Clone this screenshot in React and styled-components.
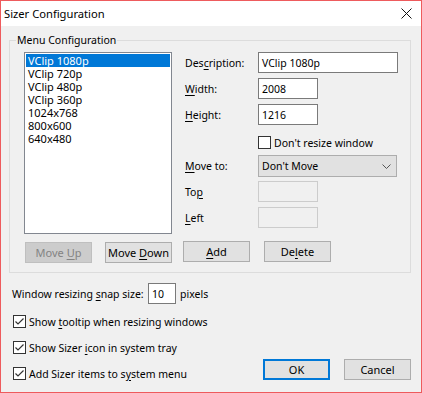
import React from "react";
import styled, { createGlobalStyle } from "styled-components";

const GlobalStyle = createGlobalStyle`
  html, body {
    margin: 0;
    padding: 0;
    background: #f0f0f0;
  }
  body {
    font-family: "Noto Sans", "Segoe UI", sans-serif;
    font-size: 10.5px;
    color: #000;
  }
`;

const Window = styled.div`
  width: 422px;
  height: 393px;
  box-sizing: border-box;
  border: 1px solid #ee5b5d;
  background: #f0f0f0;
  display: flex;
  flex-direction: column;
`;

const TitleBar = styled.div`
  height: 25px;
  background: #fff;
  display: flex;
  align-items: center;
  justify-content: space-between;
  padding: 0 9px 0 3px;
  font-size: 11.2px;
`;

const Title = styled.span`
  line-height: 16px;
`;

const Group = styled.div`
  position: relative;
  margin: 14px 0 0 8px;
  width: 402px;
  height: 233px;
  box-sizing: border-box;
  border: 1px solid #dcdcdc;
  display: flex;
  padding: 11px 0 0 14px;
`;

const Legend = styled.span`
  position: absolute;
  top: -9px;
  left: 6px;
  padding: 0 1px;
  line-height: 16px;
  background: #f0f0f0;
`;

const LeftCol = styled.div`
  width: 148px;
  display: flex;
  flex-direction: column;
`;

const ListBox = styled.div`
  height: 182px;
  box-sizing: border-box;
  border: 1px solid #828790;
  background: #fff;
  padding: 1px;
  font-size: 11px;
`;

const ListItem = styled.div`
  height: 13px;
  line-height: 13px;
  padding-left: 2px;
  white-space: nowrap;
  background: ${({ selected }) => (selected ? "#0078d7" : "transparent")};
  color: ${({ selected }) => (selected ? "#fff" : "#000")};
`;

const ButtonRow = styled.div`
  display: flex;
  gap: ${({ gap }) => gap || 14}px;
  margin-top: ${({ top }) => top || 0}px;
  margin-left: ${({ left }) => left || 0}px;
`;

const Button = styled.button`
  width: 67px;
  height: 21px;
  padding: 0;
  box-sizing: border-box;
  font: inherit;
  font-size: 11px;
  line-height: 16px;
  white-space: nowrap;
  color: ${({ disabled }) => (disabled ? "#838383" : "#000")};
  background: ${({ disabled }) => (disabled ? "#cccccc" : "#e1e1e1")};
  border: ${({ primary, disabled }) =>
    primary
      ? "2px solid #0078d7"
      : disabled
      ? "1px solid #bfbfbf"
      : "1px solid #adadad"};
`;

const RightCol = styled.div`
  margin-left: 13px;
  display: flex;
  flex-direction: column;
`;

const Row = styled.div`
  display: grid;
  grid-template-columns: 73px auto;
  align-items: center;
  margin-top: ${({ top }) => top || 0}px;
  height: ${({ h }) => h || 21}px;
`;

const Label = styled.span`
  line-height: 16px;
  white-space: nowrap;
`;

const Key = styled.u`
  text-decoration: underline;
  text-underline-offset: 2px;
`;

const Field = styled.div`
  width: ${({ w }) => w}px;
  height: 21px;
  box-sizing: border-box;
  border: 1px solid ${({ disabled }) => (disabled ? "#cccccc" : "#7a7a7a")};
  background: ${({ disabled }) => (disabled ? "#f0f0f0" : "#fff")};
  padding-left: 3px;
  display: flex;
  align-items: center;
  white-space: nowrap;
`;

const Combo = styled.div`
  width: 139px;
  height: 22px;
  box-sizing: border-box;
  border: 1px solid #adadad;
  background: #e1e1e1;
  padding: 0 5px 0 3px;
  display: flex;
  align-items: center;
  justify-content: space-between;
`;

const CheckRow = styled.label`
  display: flex;
  align-items: center;
  gap: 3px;
  height: 13px;
  margin-top: ${({ top }) => top || 0}px;
  margin-left: ${({ left }) => left || 0}px;
  white-space: nowrap;
`;

const Box = styled.span`
  width: 13px;
  height: 13px;
  box-sizing: border-box;
  border: 1px solid #333;
  background: #fff;
  display: flex;
  flex-shrink: 0;
`;

const Footer = styled.div`
  display: flex;
  align-items: flex-end;
  margin-top: 10px;
  padding: 0 10px 0 11px;
`;

const Options = styled.div`
  display: flex;
  flex-direction: column;
`;

const SnapRow = styled.div`
  display: flex;
  align-items: center;
  height: 21px;
`;

const SnapLabel = styled.span`
  width: 136px;
  white-space: nowrap;
`;

const Unit = styled.span`
  margin-left: 4px;
`;

const Actions = styled(ButtonRow)`
  margin-left: auto;
`;

const CloseIcon = () => (
  <svg width="11" height="11" viewBox="0 0 11 11">
    <path d="M0.5 0.5 L10.5 10.5 M10.5 0.5 L0.5 10.5" stroke="#111" strokeWidth="1" />
  </svg>
);

const Chevron = () => (
  <svg width="9" height="5" viewBox="0 0 9 5">
    <path d="M0.5 0.5 L4.5 4.5 L8.5 0.5" stroke="#555" strokeWidth="1" fill="none" />
  </svg>
);

const Checkbox = ({ checked, children, top, left }) => (
  <CheckRow top={top} left={left}>
    <Box>
      {checked && (
        <svg width="11" height="11" viewBox="0 0 11 11">
          <path d="M1.5 5.5 L4 8 L9.5 2.5" stroke="#333" strokeWidth="1.2" fill="none" />
        </svg>
      )}
    </Box>
    <span>{children}</span>
  </CheckRow>
);

const items = [
  "VClip 1080p",
  "VClip 720p",
  "VClip 480p",
  "VClip 360p",
  "1024x768",
  "800x600",
  "640x480",
];

export default function App() {
  return (
    <>
      <GlobalStyle />
      <Window>
        <TitleBar>
          <Title>Sizer Configuration</Title>
          <CloseIcon />
        </TitleBar>

        <Group>
          <Legend>Menu Configuration</Legend>
          <LeftCol>
            <ListBox>
              {items.map((item, i) => (
                <ListItem key={item} selected={i === 0}>
                  {item}
                </ListItem>
              ))}
            </ListBox>
            <ButtonRow top={8} left={1} gap={13}>
              <Button disabled>
                Move <Key>U</Key>p
              </Button>
              <Button>
                Move <Key>D</Key>own
              </Button>
            </ButtonRow>
          </LeftCol>

          <RightCol>
            <Row>
              <Label>
                Des<Key>c</Key>ription:
              </Label>
              <Field w={140}>VClip 1080p</Field>
            </Row>
            <Row top={5}>
              <Label>
                <Key>W</Key>idth:
              </Label>
              <Field w={60}>2008</Field>
            </Row>
            <Row top={5}>
              <Label>
                <Key>H</Key>eight:
              </Label>
              <Field w={60}>1216</Field>
            </Row>
            <Row top={11} h={13}>
              <span />
              <Checkbox>Don't resize window</Checkbox>
            </Row>
            <Row top={6} h={22}>
              <Label>
                <Key>M</Key>ove to:
              </Label>
              <Combo>
                <span>Don't Move</span>
                <Chevron />
              </Combo>
            </Row>
            <Row top={4}>
              <Label>
                To<Key>p</Key>
              </Label>
              <Field w={60} disabled />
            </Row>
            <Row top={5}>
              <Label>
                <Key>L</Key>eft
              </Label>
              <Field w={60} disabled />
            </Row>
            <ButtonRow top={13} left={-2}>
              <Button>
                <Key>A</Key>dd
              </Button>
              <Button>
                De<Key>l</Key>ete
              </Button>
            </ButtonRow>
          </RightCol>
        </Group>

        <Footer>
          <Options>
            <SnapRow>
              <SnapLabel>
                Window resizing <Key>s</Key>nap size:
              </SnapLabel>
              <Field w={28}>10</Field>
              <Unit>pixels</Unit>
            </SnapRow>
            <Checkbox checked top={11} left={1}>
              Show <Key>t</Key>ooltip when resizing windows
            </Checkbox>
            <Checkbox checked top={13} left={1}>
              Show Sizer <Key>i</Key>con in system tray
            </Checkbox>
            <Checkbox checked top={13} left={1}>
              Add Sizer items to s<Key>y</Key>stem menu
            </Checkbox>
          </Options>
          <Actions>
            <Button primary>OK</Button>
            <Button>Cancel</Button>
          </Actions>
        </Footer>
      </Window>
    </>
  );
}
